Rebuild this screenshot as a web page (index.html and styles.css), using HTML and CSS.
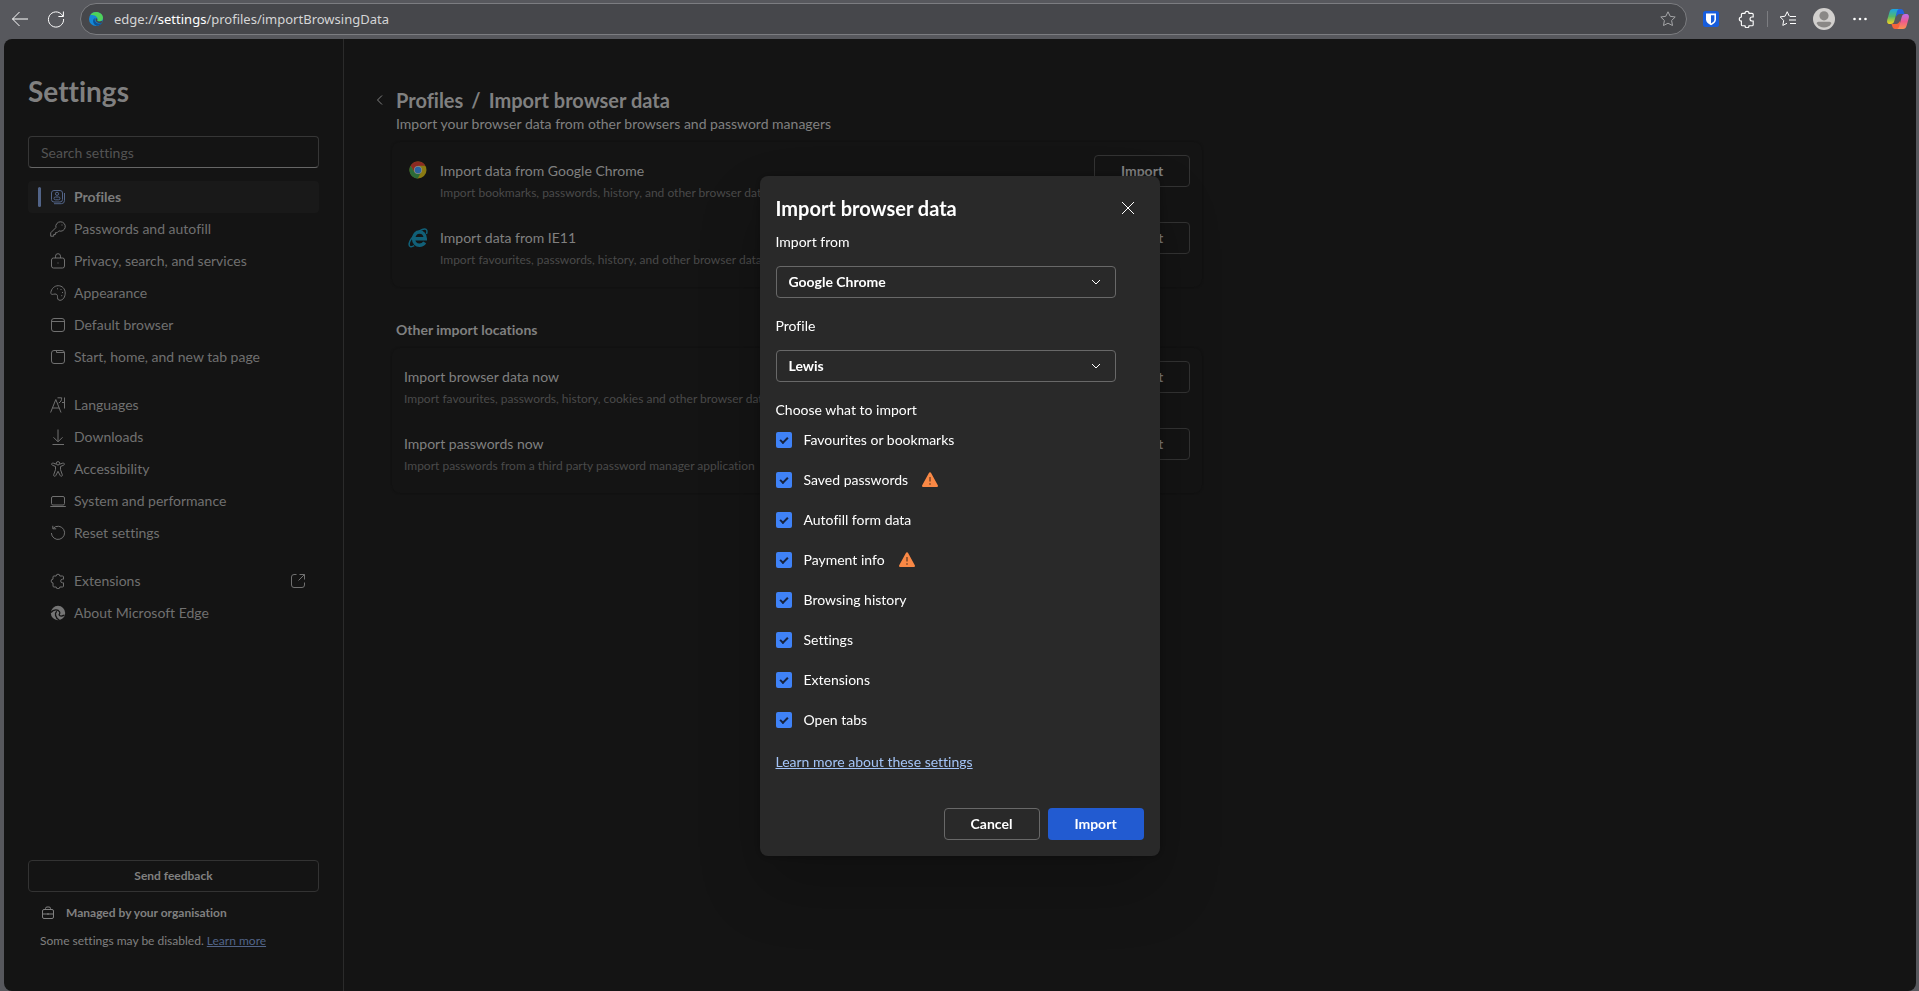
FILE: index.html
```
<!DOCTYPE html>
<html lang="en-GB">

<head>
    <meta charset="UTF-8">
    <meta name="viewport" content="width=device-width, initial-scale=1.0">
    <title>Settings</title>
    <link rel="stylesheet" href="styles.css">
</head>

<body>
    <svg class="sprite" aria-hidden="true">
        <symbol id="i-puzzle" viewBox="0 0 16 16">
            <path d="M4 3h2.200a1.800 1.800 0 0 1 3.600 0H12.500a1 1 0 0 1 1 1v2.200h-1a1.700 1.700 0 0 0 0 3.600h1V13a1 1 0 0 1-1 1H9.800a1.800 1.800 0 0 1-3.600 0H4a1 1 0 0 1-1-1V9.900a1.800 1.800 0 0 1 0-3.700V4a1 1 0 0 1 1-1z" />
        </symbol>
        <symbol id="i-down" viewBox="0 0 12 12">
            <path d="M2 4l4 4 4-4" />
        </symbol>
        <symbol id="i-warn" viewBox="0 0 16 16">
            <path fill="#f98845" d="M6.900.9a1.250 1.250 0 0 1 2.200 0l6.700 12.300A1.200 1.200 0 0 1 14.700 15H1.300a1.200 1.200 0 0 1-1.100-1.800z" />
            <path stroke="#7a4526" stroke-width="1.500" d="M8 5v4.500M8 11.200v1.600" />
        </symbol>
    </svg>

    <header class="toolbar">
        <button class="tool" aria-label="Back"><svg class="icon" width="20" height="20" viewBox="0 0 20 20"><path d="M18 10H2.500M9.500 3L2.500 10l7 7" /></svg></button>
        <button class="tool" aria-label="Refresh"><svg class="icon" width="20" height="20" viewBox="0 0 20 20"><path d="M17 7.500A7.600 7.600 0 1 0 17.600 10M17.400 2.500v5h-5" /></svg></button>
        <div class="address">
            <svg width="16" height="16" viewBox="0 0 16 16">
                <circle cx="8" cy="8" r="7" fill="#1489d8" />
                <path fill="#4fd35a" d="M2.500 4C3.500 2 5.500 1 8 1c4 0 7 2.600 7 5.800 0 2.200-1.600 3.600-3.700 3.600-1.500 0-2.300-.6-2-1.300.4-.5.500-1 .3-1.600C9 5.500 7.200 4.500 5.500 4.200c-1 0-2-.3-3-.2z" />
                <path fill="#0e5397" d="M6.700 7c-1.600 1.200-2 3-1.200 4.900.7 1.700 2.300 2.900 4.500 2.900 1.600-.5 3-1.500 4-3-3.500 1.700-8 .2-7.300-4.800z" />
                <path fill="#46474b" d="M7.700 7.300c1 0 1.800.7 1.600 1.500-.6 1 .5 1.700 2 1.700l3.500-.8-1 2c-3 1.200-7.200-.4-6.100-4.400z" />
            </svg>
            <span class="url">edge://<b>settings</b>/profiles/importBrowsingData</span>
            <button class="star" aria-label="Add to favourites"><svg class="icon" width="16" height="16" viewBox="0 0 16 16"><path d="M8 .8l2.200 4.500 5 .7-3.600 3.500.9 5L8 12.200l-4.500 2.300.9-5L.8 6l5-.7z" /></svg></button>
        </div>
        <div class="tools">
            <button class="tool" aria-label="Bitwarden"><svg width="16" height="16" viewBox="0 0 16 16"><rect width="16" height="16" rx="2.500" fill="#175ddc" /><path fill="#fff" d="M3 2.500h10v6c0 2.500-2 4.200-5 5.700-3-1.500-5-3.200-5-5.700z" /><path fill="#175ddc" d="M8 4.200h3.400v4.200c0 1.600-1.300 2.800-3.400 4z" /></svg></button>
            <button class="tool" aria-label="Extensions"><svg class="icon" width="18" height="18"><use href="#i-puzzle" /></svg></button>
            <span class="divider"></span>
            <button class="tool" aria-label="Favourites"><svg class="icon" width="18" height="18" viewBox="0 0 18 18"><path d="M10.500 6.200h-.2L8.200 1.700 6.100 6.200l-5 .7 3.600 3.500-.9 5L8 13.300M11 6.500h6M10 10h7M11 13.500h6" /></svg></button>
            <button class="tool" aria-label="Profile"><svg width="22" height="22" viewBox="0 0 24 24"><circle cx="12" cy="12" r="12" fill="#d2d0ce" /><circle cx="12" cy="8.500" r="5" fill="#8a8886" /><path fill="#8a8886" d="M4 17c0-1.200 1-2 2-2h12c1 0 2 .8 2 2a9.500 9.500 0 0 1-16 0z" /></svg></button>
            <button class="tool" aria-label="Settings and more"><svg width="16" height="16" viewBox="0 0 16 16"><g fill="#fff"><circle cx="2.500" cy="8" r="1.300" /><circle cx="8" cy="8" r="1.300" /><circle cx="13.500" cy="8" r="1.300" /></g></svg></button>
            <button class="tool copilot" aria-label="Copilot">
                <svg width="24" height="24" viewBox="0 0 24 24">
                    <defs>
                        <linearGradient id="cop-a" x1="0" y1="0" x2="0" y2="1"><stop stop-color="#19a5e8" /><stop offset=".5" stop-color="#55b86a" /><stop offset="1" stop-color="#f5d31e" /></linearGradient>
                        <linearGradient id="cop-b" x1="0" y1="0" x2="0" y2="1"><stop stop-color="#b96ef0" /><stop offset=".5" stop-color="#f05b8d" /><stop offset="1" stop-color="#fb9250" /></linearGradient>
                    </defs>
                    <path fill="#2264dc" d="M8 2h7c1.500 0 2.200 1 2.700 2.500L18.500 7H14c-2 0-3 1-3.500 3z" />
                    <path fill="#f4643b" d="M16 22H9c-1.500 0-2.200-1-2.700-2.500L5.500 17H10c2 0 3-1 3.500-3z" />
                    <path fill="url(#cop-a)" d="M7 2h6c-1.500.5-2 2-2.500 4L8.300 14c-.5 2-1.500 3-3.500 3H3.500C1.300 17 .7 15 1.200 13L3.500 5C4 3 5.200 2 7 2z" />
                    <path fill="url(#cop-b)" d="M17 22h-6c1.500-.5 2-2 2.500-4l2.200-8c.5-2 1.500-3 3.500-3h1.300c2.200 0 2.800 2 2.300 4l-2.300 8c-.5 2-1.700 3-3.500 3z" />
                </svg>
            </button>
        </div>
    </header>

    <div class="page">
        <aside class="sidebar">
            <h1>Settings</h1>
            <input class="search" type="search" placeholder="Search settings" aria-label="Search settings">
            <nav>
                <ul>
                    <li><a href="#" class="active"><svg class="icon" width="16" height="16" viewBox="0 0 16 16"><rect x="1.500" y="1.500" width="11" height="11.500" rx="2.500" /><circle cx="7" cy="4.800" r="1.600" /><rect x="4" y="8" width="6" height="2.800" rx="1.400" /><path d="M14.500 4v7.500a3.200 3.200 0 0 1-3.200 3.200H4" /></svg>Profiles</a></li>
                    <li><a href="#"><svg class="icon" width="16" height="16" viewBox="0 0 16 16"><path d="M10.500.8a4.700 4.700 0 0 0-4.600 5.800L.7 11.800v3.400h3v-1.700h1.700v-1.800h1.700l1.800-1.800A4.700 4.700 0 1 0 10.500.8z" /><path d="M11.500 4h1" /></svg>Passwords and autofill</a></li>
                    <li><a href="#"><svg class="icon" width="16" height="16" viewBox="0 0 16 16"><rect x="1.500" y="5" width="13" height="10" rx="2" /><path d="M5.500 5V3.200a2.500 2.500 0 0 1 5 0V5M7.500 10h1" /></svg>Privacy, search, and services</a></li>
                    <li><a href="#"><svg class="icon" width="16" height="16" viewBox="0 0 16 16"><path d="M.8 7.500C1.500 3.500 4.500.7 8.200.7c4 0 7 3 7 7.300 0 4-2.200 7.300-5.200 7.300-2.500 0-2.500-2-2.500-4 0-1.500-1-2.300-2.500-2.300-1.200 0-1.800.5-2.800.4C1.200 9.300.6 8.500.8 7.500z" /><path d="M7 3.800h1M10.500 4.500h1M12 7.500h1M11.200 10.700h1" /></svg>Appearance</a></li>
                    <li><a href="#"><svg class="icon" width="16" height="16" viewBox="0 0 16 16"><rect x="1.500" y="1.500" width="13" height="13" rx="2.500" /><path d="M1.500 4.500h13" /></svg>Default browser</a></li>
                    <li><a href="#"><svg class="icon" width="16" height="16" viewBox="0 0 16 16"><rect x="1.500" y="1.500" width="13" height="13" rx="2.500" /><path d="M6.500 1.500v2h8" /></svg>Start, home, and new tab page</a></li>
                </ul>
                <ul>
                    <li><a href="#"><svg class="icon" width="16" height="16" viewBox="0 0 16 16"><path d="M.6 15.500L5.800 2.500l5.200 13M2.500 11h6.600M7.500.8h4.200c0 2.500-1 4.300-3 5.200M14.500.5v11M14.500 5.500H12" /></svg>Languages</a></li>
                    <li><a href="#"><svg class="icon" width="16" height="16" viewBox="0 0 16 16"><path d="M8 .5v12M3.500 8.300L8 12.800l4.500-4.500M2.500 15.500h11.500" /></svg>Downloads</a></li>
                    <li><a href="#"><svg class="icon" width="16" height="16" viewBox="0 0 16 16"><circle cx="8" cy="2.300" r="1.700" /><path d="M6.300 3.200L3.200 2.100a1.100 1.100 0 0 0-.8 2.100l3.100 1.300v3.200l-1.800 5a1.100 1.100 0 0 0 2.100.8L8 10.300l2.200 4.200a1.100 1.100 0 0 0 2.100-.8l-1.800-5V5.500l3.100-1.300a1.100 1.100 0 0 0-.8-2.100L9.700 3.200" /></svg>Accessibility</a></li>
                    <li><a href="#"><svg class="icon" width="16" height="16" viewBox="0 0 16 16"><rect x="1.500" y="3.500" width="13" height="8.500" rx="1.500" /><path d="M.3 13.500h15.500" /></svg>System and performance</a></li>
                    <li><a href="#"><svg class="icon" width="16" height="16" viewBox="0 0 16 16"><path d="M3.200 3.300A6.600 6.600 0 1 1 1.400 8M2.800.8v3h3.400" /></svg>Reset settings</a></li>
                </ul>
                <ul>
                    <li><a href="#"><svg class="icon" width="16" height="16"><use href="#i-puzzle" /></svg>Extensions<svg class="icon external" width="16" height="16" viewBox="0 0 16 16"><path d="M6.500 1.500H4A2.500 2.500 0 0 0 1.500 4v8A2.500 2.500 0 0 0 4 14.500h8a2.500 2.500 0 0 0 2.500-2.500V9.500M9.500 1.500h5v5M14.500 1.500L8.500 7.500" /></svg></a></li>
                    <li><a href="#"><svg width="16" height="16" viewBox="0 0 16 16"><circle cx="8" cy="8" r="7.200" fill="#757575" /><path fill="none" stroke="#141414" stroke-width="1.300" d="M1 7.500c2.500-3.300 7-3.300 8.500-.7 1.200 2.200-.8 2.200-.3 3.200.6 1.200 3.300 1 5.300.2M6.800 6.200c-2.300 2-1.800 6.500 2.500 8.800" /></svg>About Microsoft Edge</a></li>
                </ul>
            </nav>
            <footer>
                <button class="feedback">Send feedback</button>
                <p class="managed"><svg class="icon" width="14" height="14" viewBox="0 0 14 14"><rect x="1.500" y="3.500" width="11" height="9" rx="1.500" /><path d="M4.500 3.500v-1a1.500 1.500 0 0 1 1.500-1.500h2a1.500 1.500 0 0 1 1.500 1.500v1M1.500 8h11M7 7v2" /></svg>Managed by your organisation</p>
                <p class="note">Some settings may be disabled. <a href="#">Learn more</a></p>
            </footer>
        </aside>

        <main>
            <div class="crumbs">
                <button class="back" aria-label="Back to profiles"><svg class="icon" width="12" height="12" viewBox="0 0 12 12"><path d="M8 1.500L3.500 6 8 10.500" /></svg></button>
                <h2>Profiles<span>/</span>Import browser data</h2>
            </div>
            <p class="intro">Import your browser data from other browsers and password managers</p>

            <section class="card with-logos">
                <div class="row">
                    <svg class="logo" width="18" height="18" viewBox="0 0 18 18"><circle cx="9" cy="9" r="8.500" fill="#8a7a12" /><path fill="#8c2a22" d="M1.600 4.700a8.500 8.500 0 0 1 14.800 0H9L5.500 11z" /><path fill="#2c6b38" d="M1.600 4.700A8.500 8.500 0 0 0 8.700 17.500l3.500-6.400L5.300 11z" /><circle cx="9" cy="9" r="4" fill="#8b8b8b" /><circle cx="9" cy="9" r="3.200" fill="#2a62a0" /></svg>
                    <div class="text">
                        <h3>Import data from Google Chrome</h3>
                        <p>Import bookmarks, passwords, history, and other browser data from Google Chrome</p>
                    </div>
                    <button class="outline">Import</button>
                </div>
                <div class="row">
                    <svg class="logo" width="20" height="20" viewBox="0 0 20 20"><g fill="none" stroke="#116078"><path stroke-width="3.400" d="M6 10.800h11.300C17.300 6.500 14.800 4 11.500 4S5.600 6.600 5.600 10.700s2.600 6.500 5.900 6.500c2.300 0 4.100-1 5.200-2.900" /><path stroke-width="1.500" d="M18.500 6C19.500 3 18.800.8 16.500 1 10.500 1.800 2.200 10 1.200 15.500c-.6 3.500 2 4 5 2.200" /></g></svg>
                    <div class="text">
                        <h3>Import data from IE11</h3>
                        <p>Import favourites, passwords, history, and other browser data from IE11</p>
                    </div>
                    <button class="outline">Import</button>
                </div>
            </section>

            <h4>Other import locations</h4>

            <section class="card">
                <div class="row">
                    <div class="text">
                        <h3>Import browser data now</h3>
                        <p>Import favourites, passwords, history, cookies and other browser data</p>
                    </div>
                    <button class="outline">Import</button>
                </div>
                <div class="row">
                    <div class="text">
                        <h3>Import passwords now</h3>
                        <p>Import passwords from a third party password manager application</p>
                    </div>
                    <button class="outline">Import</button>
                </div>
            </section>
        </main>
    </div>

    <div class="overlay">
        <dialog class="dialog" open aria-labelledby="dialog-title">
            <div class="dialog-head">
                <h2 id="dialog-title">Import browser data</h2>
                <button class="close" aria-label="Close"><svg class="icon" width="14" height="14" viewBox="0 0 14 14"><path d="M1 1l12 12M13 1L1 13" /></svg></button>
            </div>

            <label class="field-label" for="source">Import from</label>
            <div class="select">
                <select id="source">
                    <option>Google Chrome</option>
                </select>
                <svg class="icon" width="12" height="12"><use href="#i-down" /></svg>
            </div>

            <label class="field-label" for="profile">Profile</label>
            <div class="select">
                <select id="profile">
                    <option>Lewis</option>
                </select>
                <svg class="icon" width="12" height="12"><use href="#i-down" /></svg>
            </div>

            <fieldset>
                <legend>Choose what to import</legend>
                <label><input type="checkbox" checked>Favourites or bookmarks</label>
                <label><input type="checkbox" checked>Saved passwords<svg class="warn" width="16" height="16"><use href="#i-warn" /></svg></label>
                <label><input type="checkbox" checked>Autofill form data</label>
                <label><input type="checkbox" checked>Payment info<svg class="warn" width="16" height="16"><use href="#i-warn" /></svg></label>
                <label><input type="checkbox" checked>Browsing history</label>
                <label><input type="checkbox" checked>Settings</label>
                <label><input type="checkbox" checked>Extensions</label>
                <label><input type="checkbox" checked>Open tabs</label>
            </fieldset>

            <a class="learn" href="#">Learn more about these settings</a>

            <div class="actions">
                <button class="cancel">Cancel</button>
                <button class="primary">Import</button>
            </div>
        </dialog>
    </div>
</body>

</html>
```
FILE: styles.css
```
* {
    box-sizing: border-box;
}

body {
    margin: 0;
    height: 100vh;
    display: flex;
    flex-direction: column;
    background-color: #57585d;
    font-family: Lato, sans-serif;
    font-size: 14px;
    line-height: 20px;
    font-variant-ligatures: none;
    color: #808080;
}

h1, h2, h3, h4, p, ul, fieldset, legend {
    margin: 0;
    padding: 0;
    border: none;
}

button, input, select {
    font: inherit;
    color: inherit;
}

button {
    padding: 0;
    background: none;
    border: none;
    border-radius: 4px;
    cursor: pointer;
}

svg {
    display: block;
    flex: none;
}

.sprite {
    position: absolute;
    width: 0;
    height: 0;
}

.icon {
    fill: none;
    stroke: currentColor;
}

/* browser toolbar */
.toolbar {
    display: flex;
    align-items: center;
    height: 39px;
    padding: 0 9px 1px 10px;
    color: #fff;
}

.tool {
    display: grid;
    place-items: center;
}

.toolbar > .tool {
    margin-right: 16px;
}

.address {
    flex: 1;
    display: flex;
    align-items: center;
    gap: 10px;
    height: 32px;
    margin-left: -2px;
    padding: 0 10px 0 7px;
    background-color: #46474b;
    border: 1px solid #7c7d81;
    border-radius: 16px;
}

.url {
    flex: 1;
    font-family: "Noto Sans", sans-serif;
    font-size: 13px;
    color: #d5d5d6;
}

.url b {
    font-weight: 400;
    color: #fff;
}

.star {
    color: #a5a6a8;
}

.tools {
    display: flex;
    align-items: center;
    gap: 12px;
    padding-left: 12px;
}

.tools .tool {
    min-width: 24px;
}

.tools .copilot {
    margin-left: 2px;
}

.divider {
    width: 1px;
    height: 16px;
    margin: 0 -4px;
    background-color: #7c7d81;
}

/* settings page */
.page {
    flex: 1;
    display: flex;
    min-height: 0;
    margin: 0 3px 0 4px;
    background-color: #141414;
    border-radius: 8px;
    overflow: hidden;
}

.sidebar {
    width: 340px;
    display: flex;
    flex-direction: column;
    padding: 34px 24px 40px;
    border-right: 1px solid #2b2b2b;
}

h1 {
    font-size: 28px;
    line-height: 36px;
}

.search {
    height: 32px;
    margin-top: 27px;
    padding: 0 12px;
    background: none;
    border: 1px solid #363636;
    border-bottom-color: #666;
    border-radius: 4px;
    appearance: none;
}

.search::placeholder {
    color: #535353;
    opacity: 1;
}

nav {
    flex: 1;
    display: flex;
    flex-direction: column;
    gap: 16px;
    margin-top: 13px;
}

nav ul {
    list-style: none;
}

nav a {
    display: flex;
    align-items: center;
    gap: 8px;
    height: 32px;
    padding: 0 13px 0 22px;
    border-radius: 4px;
    color: #707070;
    text-decoration: none;
}

nav a.active {
    padding-left: 10px;
    background-color: #191919;
    color: #7c7c7c;
    font-weight: 700;
}

nav a.active::before {
    content: "";
    width: 3px;
    height: 20px;
    margin-right: 1px;
    border-radius: 2px;
    background-color: #526488;
}

nav a.active .icon {
    color: #526488;
}

.external {
    margin-left: auto;
}

.feedback {
    width: 100%;
    height: 32px;
    border: 1px solid #333;
    font-size: 12px;
    font-weight: 700;
}

.managed {
    display: flex;
    align-items: center;
    gap: 11px;
    margin-top: 11px;
    padding-left: 13px;
    font-size: 12px;
    font-weight: 700;
}

.note {
    margin-top: 8px;
    padding-left: 12px;
    font-size: 12px;
}

.note a {
    color: #526488;
}

main {
    flex: 1;
    padding: 47px 48px 0;
}

.crumbs {
    display: flex;
    align-items: center;
    gap: 10px;
    margin-left: -18px;
}

.crumbs h2 {
    font-size: 20px;
    line-height: 28px;
}

.crumbs span {
    margin: 0 8px;
}

.intro {
    padding-left: 4px;
}

.card {
    max-width: 810px;
    margin-top: 8px;
    padding: 5px 12px 6px;
    border-radius: 8px;
    box-shadow: 0 0 2px #0f0f0f;
}

.card.with-logos {
    padding-left: 16px;
}

.row {
    display: flex;
    align-items: flex-start;
    gap: 12px;
    min-height: 67px;
    padding-top: 8px;
}

.logo {
    margin-top: 6px;
}

.card.with-logos .logo {
    width: 20px;
}

.row .text {
    flex: 1;
    padding-top: 6px;
}

h3 {
    font-size: 14px;
    font-weight: 400;
}

.row p {
    margin-top: 2px;
    font-size: 12px;
    color: #4a4a4a;
}

.outline {
    width: 96px;
    height: 32px;
    border: 1px solid #333;
    font-weight: 700;
}

h4 {
    margin-top: 33px;
    padding-left: 4px;
    font-size: 14px;
}

/* import dialog */
.overlay {
    position: fixed;
    inset: 41px 0 0;
    display: grid;
    place-items: center;
}

.dialog {
    position: static;
    width: 400px;
    margin: 0;
    padding: 16px;
    background-color: #292929;
    border: none;
    border-radius: 8px;
    box-shadow: 0 0 8px rgba(0, 0, 0, 0.3), 0 32px 64px rgba(0, 0, 0, 0.2);
    color: #fff;
}

.dialog-head {
    display: flex;
    align-items: center;
    justify-content: space-between;
    height: 32px;
    padding-right: 9px;
}

.dialog h2 {
    font-size: 20px;
    line-height: 28px;
}

.field-label {
    display: block;
    margin: 8px 0 14px;
}

.select {
    display: grid;
    align-items: center;
    width: 340px;
    margin-bottom: 18px;
}

.select select, .select svg {
    grid-area: 1 / 1;
}

.select select {
    height: 32px;
    padding: 0 12px;
    background: none;
    border: 1px solid #686868;
    border-radius: 4px;
    font-weight: 700;
    appearance: none;
}

.select svg {
    justify-self: end;
    margin-right: 14px;
    pointer-events: none;
}

fieldset label {
    display: flex;
    align-items: center;
    height: 40px;
}

fieldset input {
    display: grid;
    place-items: center;
    width: 16px;
    height: 16px;
    margin: 0 12px 0 0;
    background-color: #3f82f7;
    border-radius: 2px;
    appearance: none;
}

fieldset input:checked::before {
    content: "";
    width: 6px;
    height: 3px;
    margin-bottom: 2px;
    border: solid #16233d;
    border-width: 0 0 2px 2px;
    transform: rotate(-45deg);
}

.warn {
    margin-left: 14px;
}

.learn {
    display: block;
    margin-top: 12px;
    color: #a3c4f7;
}

.actions {
    display: flex;
    justify-content: flex-end;
    gap: 8px;
    margin-top: 36px;
}

.actions button {
    width: 96px;
    height: 32px;
    font-weight: 700;
}

.cancel {
    border: 1px solid #686868;
}

.primary {
    background-color: #225bd1;
}
```
